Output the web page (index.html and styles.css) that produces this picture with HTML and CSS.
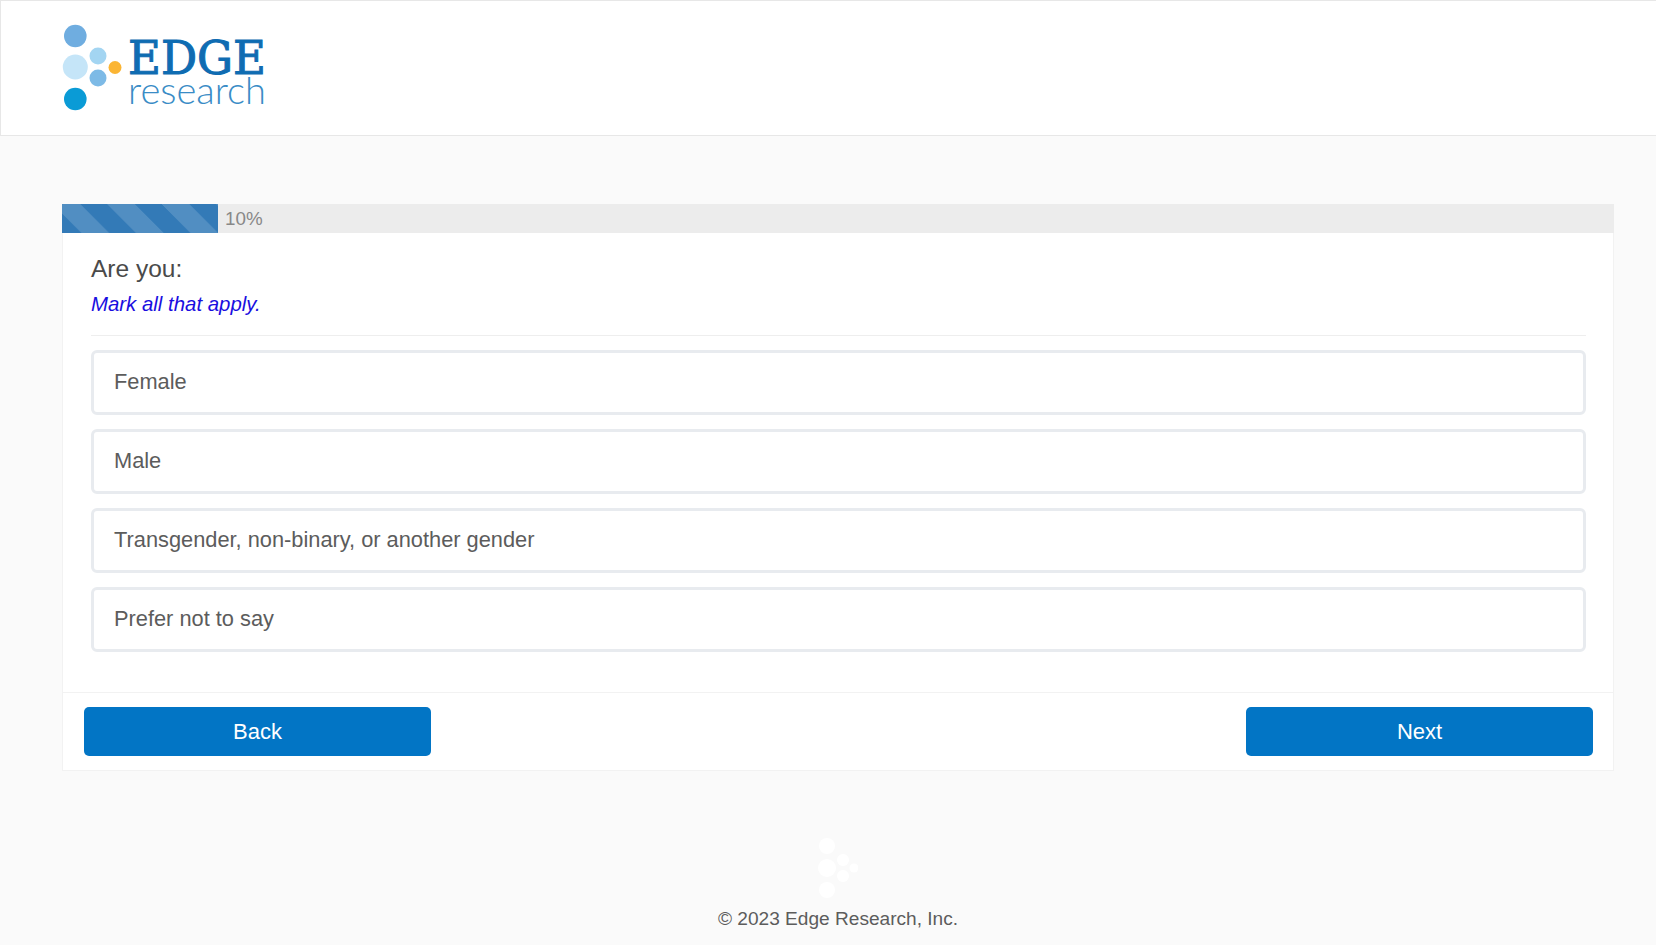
FILE: index.html
```html
<!DOCTYPE html>
<html lang="en">
<head>
<meta charset="utf-8">
<title>Edge Research Survey</title>
<link rel="stylesheet" href="styles.css">
</head>
<body>
<header class="site-header">
  <svg class="logo" viewBox="0 0 210 95" width="210" height="95" role="img" aria-label="Edge Research">
    <circle cx="12.3" cy="12" r="11.3" fill="#6fade0"/>
    <circle cx="12.3" cy="43" r="12.5" fill="#c5e5f8"/>
    <circle cx="35" cy="32" r="8.5" fill="#a3d5f2"/>
    <circle cx="35" cy="54" r="8.5" fill="#7dbae6"/>
    <circle cx="52" cy="43.5" r="6.5" fill="#fbb534"/>
    <circle cx="12.3" cy="75" r="11.3" fill="#0a9bd6"/>
    <text class="logo-edge" x="65" y="50" textLength="138" lengthAdjust="spacingAndGlyphs">EDGE</text>
    <text class="logo-research" x="65" y="80" textLength="138" lengthAdjust="spacingAndGlyphs">research</text>
  </svg>
</header>
<main class="survey">
  <div class="progress">
    <div class="progress-fill"></div>
    <span class="progress-label">10%</span>
  </div>
  <section class="panel">
    <div class="panel-body">
      <h1 class="question">Are you:</h1>
      <p class="hint">Mark all that apply.</p>
      <hr class="rule">
      <div class="options">
        <div class="option">Female</div>
        <div class="option">Male</div>
        <div class="option">Transgender, non-binary, or another gender</div>
        <div class="option">Prefer not to say</div>
      </div>
    </div>
    <div class="panel-footer">
      <button class="btn" type="button">Back</button>
      <button class="btn" type="button">Next</button>
    </div>
  </section>
</main>
<footer class="site-footer">
  <svg class="ghost" viewBox="0 0 40 60" width="40" height="60" aria-hidden="true">
    <circle cx="9" cy="8" r="8" fill="#fff"/>
    <circle cx="9" cy="30" r="9" fill="#fff"/>
    <circle cx="25" cy="22" r="6" fill="#fff"/>
    <circle cx="25" cy="38" r="6" fill="#fff"/>
    <circle cx="36" cy="30" r="4.5" fill="#fff"/>
    <circle cx="9" cy="52" r="8" fill="#fff"/>
  </svg>
  <p class="copyright">© 2023 Edge Research, Inc.</p>
</footer>
</body>
</html>
```
FILE: styles.css
```css
* { box-sizing: border-box; }
html, body { margin: 0; height: 945px; overflow: hidden; }
body {
  background: #fafafa;
  color: #555;
  font-family: "Liberation Sans", Arial, sans-serif;
  font-size: 22px;
  display: flex;
  flex-direction: column;
}
.site-header {
  height: 136px;
  background: #fff;
  border: 1px solid #e7e7e7;
  border-right: 0;
  padding: 23px 0 0 62px;
}
.logo { display: block; overflow: visible; }
.logo-edge {
  font-family: "DejaVu Serif", serif;
  font-size: 47px;
  fill: #0f6cb2;
  stroke: #0f6cb2;
  stroke-width: 1.1px;
}
.logo-research {
  font-family: Lato, sans-serif;
  font-weight: 300;
  font-size: 37px;
  fill: #3a8cc6;
}
.survey { padding: 68px 42px 0 62px; }
.progress {
  height: 29px;
  background: #ececec;
  display: flex;
  align-items: center;
}
.progress-fill {
  width: 156px;
  height: 100%;
  background-color: #337ab7;
  background-image: linear-gradient(45deg, rgba(255,255,255,.15) 25%, transparent 25%, transparent 50%, rgba(255,255,255,.15) 50%, rgba(255,255,255,.15) 75%, transparent 75%, transparent);
  background-size: 54.5px 54.5px;
  background-position: -9px 0;
}
.progress-label { margin-left: 7px; font-size: 18.8px; color: #888; }
.panel {
  background: #fff;
  border: 1px solid #f2f2f2;
  border-top: 0;
  height: 538px;
  display: flex;
  flex-direction: column;
}
.panel-body { flex: 1; padding: 20px 27px 0 28px; }
.question { margin: 0; font-size: 24.5px; font-weight: 400; line-height: 32px; color: #4a4a4a; }
.hint { margin: 4px 0 0; font-size: 20.4px; line-height: 30px; font-style: italic; color: #1a0ee0; }
.rule { border: 0; border-top: 1px solid #eee; margin: 16px 0 14px; }
.options { display: flex; flex-direction: column; gap: 14px; }
.option {
  height: 65px;
  border: 3px solid #e8ebef;
  border-radius: 6px;
  padding: 0 20px 2px;
  display: flex;
  align-items: center;
  font-size: 21.8px;
  color: #5c5c5c;
}
.panel-footer {
  height: 78px;
  border-top: 1px solid #f2f2f2;
  padding: 14px 20px 14px 21px;
  display: flex;
  justify-content: space-between;
}
.btn {
  width: 347px;
  height: 49px;
  background: #0275c5;
  border: 0;
  border-radius: 5px;
  color: #fff;
  font: 22px "Liberation Sans", Arial, sans-serif;
}
.site-footer {
  display: flex;
  flex-direction: column;
  align-items: center;
  padding: 67px 0 0 20px;
}
.ghost { display: block; }
.copyright { margin: 7px 0 0; font-size: 19.1px; line-height: 28px; color: #5c5c5c; }
```
